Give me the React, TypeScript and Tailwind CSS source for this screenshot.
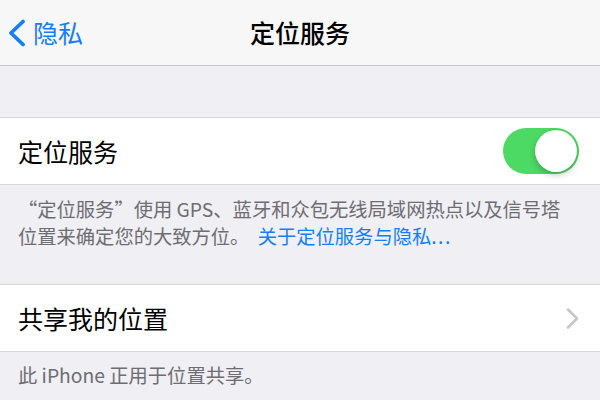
const font = "font-['Noto_Sans_CJK_SC','Noto_Sans',sans-serif]";

const BackChevron = () => (
  <svg width="20" height="28" viewBox="0 0 20 28" fill="none">
    <path d="M17 2.5 L5 14 L17 25.5" stroke="#157efb" strokeWidth="3.8" strokeLinecap="round" strokeLinejoin="round" />
  </svg>
);

const RowChevron = () => (
  <svg width="13" height="21" viewBox="0 0 13 21" fill="none">
    <path d="M2 1.5 L11 10.5 L2 19.5" stroke="#c7c7cc" strokeWidth="2.6" strokeLinecap="round" strokeLinejoin="round" />
  </svg>
);

const Toggle = () => (
  <div className="flex h-[46px] w-[76px] items-center justify-end rounded-full bg-[#4cd964] px-[2px]">
    <div className="h-[42px] w-[42px] rounded-full bg-white shadow-[0_3px_6px_rgba(0,0,0,0.22),0_0_0_0.5px_rgba(0,0,0,0.06)]" />
  </div>
);

export default function App() {
  return (
    <div className={`${font} h-[400px] w-[600px] overflow-hidden bg-[#efeff4]`}>
      <nav className="grid h-[66px] grid-cols-[1fr_auto_1fr] items-center border-b border-[#c8c7cc] bg-[#f7f7f8]">
        <div className="flex items-center pl-[6px]">
          <BackChevron />
          <span className="ml-[7px] text-[25px] leading-none text-[#157efb]">隐私</span>
        </div>
        <h1 className="text-[25px] font-medium leading-none text-black">定位服务</h1>
        <div />
      </nav>

      <div className="h-[51px]" />

      <div className="flex h-[68px] items-center justify-between border-y border-[#d8d8dc] bg-white pl-[18px] pr-[21px]">
        <span className="text-[25px] leading-none text-black">定位服务</span>
        <Toggle />
      </div>

      <p className="pl-[18px] pt-[11px] text-[19.3px] leading-[27px] text-[#6d6d72]">
        “定位服务”使用 GPS、蓝牙和众包无线局域网热点以及信号塔
        <br />
        位置来确定您的大致方位。 <span className="ml-[4px] text-[#157efb]">关于定位服务与隐私<span className="tracking-[1.5px]">...</span></span>
      </p>

      <div className="h-[34px]" />

      <div className="flex h-[68px] items-center justify-between border-y border-[#d8d8dc] bg-white pl-[18px] pr-[21px]">
        <span className="text-[25px] leading-none text-black">共享我的位置</span>
        <RowChevron />
      </div>

      <p className="pl-[18px] pt-[10px] text-[19.3px] leading-[27px] text-[#6d6d72]">
        此 iPhone 正用于位置共享。
      </p>
    </div>
  );
}
